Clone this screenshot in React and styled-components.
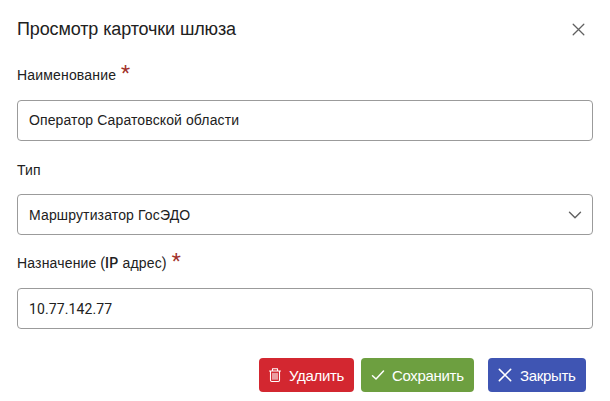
import React, { useState } from 'react';
import styled, { createGlobalStyle } from 'styled-components';

const GlobalStyle = createGlobalStyle`
  * {
    box-sizing: border-box;
  }

  body {
    margin: 0;
    background-color: #ffffff;
    color: #212121;
    font-family: 'Liberation Sans', Arial, sans-serif;
    font-size: 14px;
  }
`;

const Dialog = styled.div`
  display: flex;
  flex-direction: column;
  height: 401px;
  padding: 16px 17px 9px;
`;

const Header = styled.header`
  display: flex;
  justify-content: space-between;
  align-items: center;
  height: 26px;
  margin-bottom: 5px;
`;

const Title = styled.h3`
  margin: 0;
  font-size: 18px;
  font-weight: 400;
  line-height: 26px;
  letter-spacing: -0.12px;
`;

const IconButton = styled.button`
  display: flex;
  padding: 6px;
  border: none;
  background: none;
  color: #616161;
  cursor: pointer;
`;

const Field = styled.div`
  display: flex;
  flex-direction: column;
  height: 94px;
  padding-top: 15px;
`;

const Label = styled.label`
  display: flex;
  height: 38px;
  line-height: ${props => props.$plain ? '29px' : '27px'};
  letter-spacing: 0.17px;
  white-space: pre;
`;

const Latin = styled.span`
  font-family: Roboto, sans-serif;
  font-weight: ${props => props.$medium ? 500 : 400};
`;

const Required = styled.span`
  margin-left: 5px;
  color: #a2322c;
  font-family: Roboto, sans-serif;
  font-size: 21px;
  line-height: 23px;
`;

const Control = styled.div`
  display: flex;
  align-items: center;
  height: 41px;
  padding: 0 10px 0 11px;
  border: 1px solid #9b9b9b;
  border-radius: 4px;
`;

const Input = styled.input`
  flex-grow: 1;
  padding: ${props => props.$latin ? '0' : '0 0 2px'};
  border: none;
  outline: none;
  background: none;
  color: inherit;
  font-family: ${props => props.$latin ? 'Roboto, sans-serif' : 'inherit'};
  font-size: 14px;
  letter-spacing: ${props => props.$latin ? '0.12px' : '0.11px'};
`;

const Value = styled.span`
  flex-grow: 1;
  letter-spacing: 0.14px;
`;

const Arrow = styled.span`
  display: flex;
  color: #616161;
`;

const Footer = styled.footer`
  display: flex;
  justify-content: flex-end;
  margin-top: auto;
  padding-right: 7px;
`;

const Button = styled.button`
  display: flex;
  align-items: center;
  gap: 6px;
  width: ${props => props.$width};
  height: 34px;
  margin-left: ${props => props.$gap || '7px'};
  padding: 0 0 0 8px;
  border: none;
  border-radius: 4px;
  background-color: ${props => props.$color};
  color: #ffffff;
  font-family: inherit;
  font-size: 15px;
  letter-spacing: -0.32px;
  cursor: pointer;
`;

const CrossIcon = ({ size, line }) => (
    <svg width={size} height={size} viewBox="0 0 16 16" fill="none" stroke="currentColor" strokeWidth={line} strokeLinecap="round">
        <path d="M3 3L13 13M13 3L3 13" />
    </svg>
);

const CheckIcon = () => (
    <svg width="17" height="16" viewBox="0 0 17 16" fill="none" stroke="currentColor" strokeWidth="1.5" strokeLinecap="round" strokeLinejoin="round">
        <path d="M3.5 8.8L7 12L14.5 4" />
    </svg>
);

const TrashIcon = () => (
    <svg width="16" height="16" viewBox="0 0 16 16" fill="none" stroke="currentColor" strokeWidth="1.1" strokeLinecap="round" strokeLinejoin="round">
        <path d="M2.5 4H13.5M5.5 3.8V1.7H10.5V3.8M3.5 4.2V13.3Q3.5 14.5 4.7 14.5H11.3Q12.5 14.5 12.5 13.3V4.2M6 6.3V12.3M8 6.3V12.3M10 6.3V12.3" />
    </svg>
);

const ChevronIcon = () => (
    <svg width="14" height="14" viewBox="0 0 14 14" fill="none" stroke="currentColor" strokeWidth="1.4" strokeLinecap="round" strokeLinejoin="round">
        <path d="M1.5 4.3L7 9.7L12.5 4.3" />
    </svg>
);

const App = () => {
    const [name, setName] = useState('Оператор Саратовской области');
    const [address, setAddress] = useState('10.77.142.77');

    return (
        <>
            <GlobalStyle />
            <Dialog>
                <Header>
                    <Title>Просмотр карточки шлюза</Title>
                    <IconButton type="button" aria-label="Закрыть">
                        <CrossIcon size={17} line={1.2} />
                    </IconButton>
                </Header>
                <Field>
                    <Label htmlFor="name">Наименование<Required>*</Required></Label>
                    <Control>
                        <Input id="name" value={name} onChange={(e) => setName(e.target.value)} />
                    </Control>
                </Field>
                <Field>
                    <Label $plain>Тип</Label>
                    <Control>
                        <Value>Маршрутизатор ГосЭДО</Value>
                        <Arrow><ChevronIcon /></Arrow>
                    </Control>
                </Field>
                <Field>
                    <Label htmlFor="address">Назначение<Latin> (</Latin><Latin $medium>IP</Latin> адрес<Latin>)</Latin><Required>*</Required></Label>
                    <Control>
                        <Input id="address" $latin value={address} onChange={(e) => setAddress(e.target.value)} />
                    </Control>
                </Field>
                <Footer>
                    <Button type="button" $color="#d32730" $width="95px"><TrashIcon />Удалить</Button>
                    <Button type="button" $color="#6d9f40" $width="113px"><CheckIcon />Сохранить</Button>
                    <Button type="button" $color="#3f55b3" $width="98px" $gap="14px"><CrossIcon size={18} line={1.4} />Закрыть</Button>
                </Footer>
            </Dialog>
        </>
    );
};

export default App;
